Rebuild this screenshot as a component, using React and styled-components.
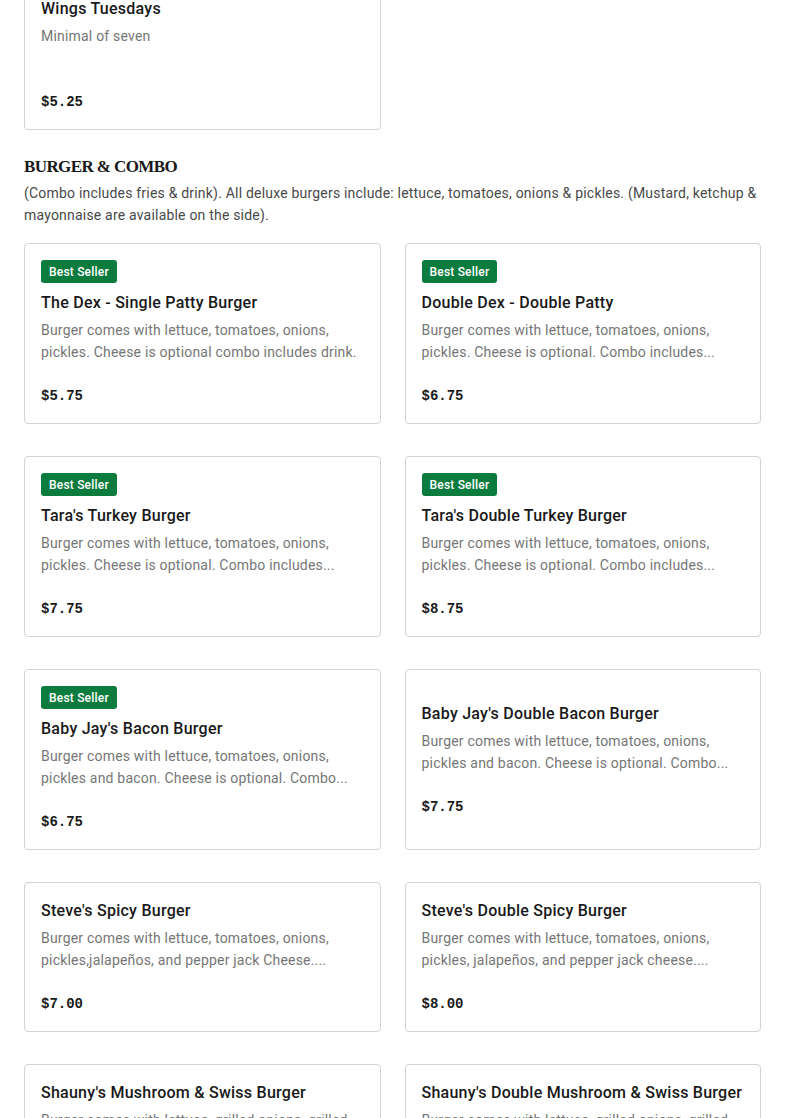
import React from "react";
import styled, { createGlobalStyle } from "styled-components";

const sections = [
  {
    id: "wings",
    items: [
      { name: "Wings Tuesdays", desc: "Minimal of seven", price: "$5.25" },
    ],
  },
  {
    id: "burgers",
    title: "Burger & Combo",
    subtitle:
      "(Combo includes fries & drink). All deluxe burgers include: lettuce, tomatoes, onions & pickles. (Mustard, ketchup & mayonnaise are available on the side).",
    items: [
      {
        name: "The Dex - Single Patty Burger",
        desc: "Burger comes with lettuce, tomatoes, onions, pickles. Cheese is optional combo includes drink.",
        price: "$5.75",
        best: true,
      },
      {
        name: "Double Dex - Double Patty",
        desc: "Burger comes with lettuce, tomatoes, onions, pickles. Cheese is optional. Combo includes...",
        price: "$6.75",
        best: true,
      },
      {
        name: "Tara's Turkey Burger",
        desc: "Burger comes with lettuce, tomatoes, onions, pickles. Cheese is optional. Combo includes...",
        price: "$7.75",
        best: true,
      },
      {
        name: "Tara's Double Turkey Burger",
        desc: "Burger comes with lettuce, tomatoes, onions, pickles. Cheese is optional. Combo includes...",
        price: "$8.75",
        best: true,
      },
      {
        name: "Baby Jay's Bacon Burger",
        desc: "Burger comes with lettuce, tomatoes, onions, pickles and bacon. Cheese is optional. Combo...",
        price: "$6.75",
        best: true,
      },
      {
        name: "Baby Jay's Double Bacon Burger",
        desc: "Burger comes with lettuce, tomatoes, onions, pickles and bacon. Cheese is optional. Combo...",
        price: "$7.75",
      },
      {
        name: "Steve's Spicy Burger",
        desc: "Burger comes with lettuce, tomatoes, onions, pickles,jalapeños, and pepper jack Cheese....",
        price: "$7.00",
      },
      {
        name: "Steve's Double Spicy Burger",
        desc: "Burger comes with lettuce, tomatoes, onions, pickles, jalapeños, and pepper jack cheese....",
        price: "$8.00",
      },
      {
        name: "Shauny's Mushroom & Swiss Burger",
        desc: "Burger comes with lettuce, grilled onions, grilled mushrooms and swiss cheese...",
        price: "$8.25",
      },
      {
        name: "Shauny's Double Mushroom & Swiss Burger",
        desc: "Burger comes with lettuce, grilled onions, grilled mushrooms and swiss cheese...",
        price: "$9.25",
      },
    ],
  },
];

function App() {
  return (
    <>
      <GlobalStyle />
      <Page>
        {sections.map((section) => (
          <Section key={section.id}>
            {section.title && (
              <SectionHeader>
                <SectionTitle>{section.title}</SectionTitle>
                <SectionSubtitle>{section.subtitle}</SectionSubtitle>
              </SectionHeader>
            )}
            <Grid>
              {section.items.map((item) => (
                <Card key={item.name}>
                  {item.best && <Badge>Best Seller</Badge>}
                  <ItemName>{item.name}</ItemName>
                  <ItemDesc>{item.desc}</ItemDesc>
                  <Price>{item.price}</Price>
                </Card>
              ))}
            </Grid>
          </Section>
        ))}
      </Page>
    </>
  );
}

export default App;

const GlobalStyle = createGlobalStyle`
  html, body {
    margin: 0;
    padding: 0;
    background: #ffffff;
    overflow: hidden;
  }
  body {
    font-family: Roboto, "Liberation Sans", sans-serif;
    color: #191919;
  }
`;

// page is shown scrolled: the wings card starts above the fold
const Page = styled.main`
  display: flex;
  flex-direction: column;
  gap: 24px;
  padding: 0 24px;
  margin-top: -20px;
`;

const Section = styled.section`
  display: flex;
  flex-direction: column;
  gap: 17px;
`;

const SectionHeader = styled.header`
  display: flex;
  flex-direction: column;
`;

const SectionTitle = styled.h2`
  margin: 0;
  font-family: "Liberation Serif", "DejaVu Serif", serif;
  font-size: 17px;
  line-height: 26px;
  font-weight: 700;
  letter-spacing: -0.6px;
  text-transform: uppercase;
  color: #191919;
`;

const SectionSubtitle = styled.p`
  margin: 2px 0 0;
  font-size: 14px;
  line-height: 22px;
  letter-spacing: 0.2px;
  color: #494949;
`;

const Grid = styled.div`
  display: grid;
  grid-template-columns: 1fr 1fr;
  column-gap: 24px;
  row-gap: 32px;
`;

const Card = styled.article`
  display: flex;
  flex-direction: column;
  justify-content: center;
  align-items: flex-start;
  padding: 16px;
  border: 1px solid #d3d3d3;
  border-radius: 4px;
  background: #ffffff;
  min-width: 0;
`;

const Badge = styled.span`
  display: inline-flex;
  align-items: center;
  height: 23px;
  padding: 0 8px;
  margin-bottom: 8px;
  border-radius: 3px;
  background: #0b7b3e;
  color: #ffffff;
  font-size: 12px;
  font-weight: 500;
  letter-spacing: 0.2px;
`;

const ItemName = styled.h3`
  margin: 0 0 4px;
  font-size: 16px;
  line-height: 24px;
  font-weight: 500;
  letter-spacing: 0.25px;
  color: #191919;
  white-space: nowrap;
`;

const ItemDesc = styled.p`
  margin: 0;
  height: 44px;
  font-size: 14px;
  line-height: 22px;
  letter-spacing: 0.2px;
  color: #767676;
  overflow: hidden;
  display: -webkit-box;
  -webkit-line-clamp: 2;
  -webkit-box-orient: vertical;
`;

const Price = styled.span`
  margin-top: 22px;
  font-family: "Liberation Mono", "DejaVu Sans Mono", monospace;
  font-size: 14px;
  line-height: 22px;
  font-weight: 700;
  color: #191919;
`;
